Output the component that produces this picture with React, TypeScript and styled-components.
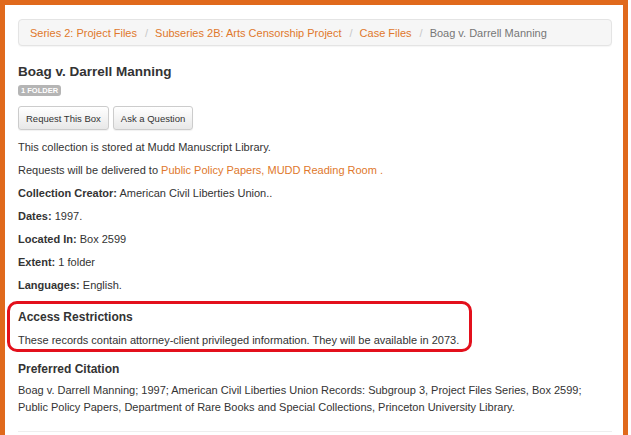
import styled, { createGlobalStyle } from "styled-components";

const GlobalStyle = createGlobalStyle`
  html, body {
    margin: 0;
    padding: 0;
    background: #fff;
  }
  body {
    font-family: "Liberation Sans", Arial, sans-serif;
    color: #333;
  }
`;

const crumbs = [
  "Series 2: Project Files",
  "Subseries 2B: Arts Censorship Project",
  "Case Files",
];

const details = [
  { label: "Collection Creator:", value: "American Civil Liberties Union.." },
  { label: "Dates:", value: "1997." },
  { label: "Located In:", value: "Box 2599" },
  { label: "Extent:", value: "1 folder" },
  { label: "Languages:", value: "English." },
];

const App = () => {
  return (
    <>
      <GlobalStyle />
      <Frame>
        <Breadcrumb>
          {crumbs.map((c) => (
            <Crumb key={c}>
              <CrumbLink href="#">{c}</CrumbLink>
              <Divider>/</Divider>
            </Crumb>
          ))}
          <Crumb $active>Boag v. Darrell Manning</Crumb>
        </Breadcrumb>

        <Title>Boag v. Darrell Manning</Title>
        <Badge>1 Folder</Badge>

        <ButtonsWrapper>
          <Button>Request This Box</Button>
          <Button>Ask a Question</Button>
        </ButtonsWrapper>

        <Text>This collection is stored at Mudd Manuscript Library.</Text>
        <Text>
          Requests will be delivered to{" "}
          <Link href="#">Public Policy Papers, MUDD Reading Room .</Link>
        </Text>
        {details.map((d) => (
          <Text key={d.label}>
            <Label>{d.label}</Label> {d.value}
          </Text>
        ))}

        <Highlight>
          <Heading>Access Restrictions</Heading>
          <Text $last>
            These records contain attorney-client privileged information. They
            will be available in 2073.
          </Text>
        </Highlight>

        <Heading $spaced>Preferred Citation</Heading>
        <Citation>
          Boag v. Darrell Manning; 1997; American Civil Liberties Union Records:
          Subgroup 3, Project Files Series, Box 2599;
          <br />
          Public Policy Papers, Department of Rare Books and Special
          Collections, Princeton University Library.
        </Citation>

        <Rule />
      </Frame>
    </>
  );
};

export default App;

const Frame = styled.div`
  width: 628px;
  min-height: 470px;
  box-sizing: border-box;
  border: 5px solid #e0691c;
  padding: 14px 11px 20px 13px;
  background: #fff;
`;

const Breadcrumb = styled.ol`
  display: flex;
  align-items: center;
  list-style: none;
  margin: 0;
  height: 27px;
  box-sizing: border-box;
  padding: 0 11px;
  background: #f6f6f6;
  border: 1px solid #e4e4e4;
  border-radius: 4px;
  box-shadow: 0 1px 1px rgba(0, 0, 0, 0.04);
  font-size: 11px;
`;

const Crumb = styled.li<{ $active?: boolean }>`
  display: flex;
  align-items: center;
  white-space: nowrap;
  color: ${(p) => (p.$active ? "#777" : "#e0782c")};
`;

const CrumbLink = styled.a`
  color: #e0782c;
  text-decoration: none;
`;

const Divider = styled.span`
  color: #c8c8c8;
  padding: 0 7px 0 8px;
`;

const Title = styled.h1`
  margin: 18px 0 0;
  font-size: 13.5px;
  line-height: 16px;
  font-weight: bold;
  color: #333;
`;

const Badge = styled.span`
  display: block;
  width: fit-content;
  margin-top: 5px;
  height: 11px;
  line-height: 11px;
  padding: 0 3px;
  background: #b5b5b5;
  color: #fff;
  font-size: 7.5px;
  font-weight: bold;
  text-transform: uppercase;
  border-radius: 3px;
`;

const ButtonsWrapper = styled.div`
  display: flex;
  gap: 4px;
  margin: 10px 0 9px;
`;

const Button = styled.button`
  height: 24px;
  padding: 0 7px;
  font-family: "Liberation Sans", Arial, sans-serif;
  font-size: 9.5px;
  color: #333;
  background: linear-gradient(#ffffff, #e8e8e8);
  border: 1px solid #cccccc;
  border-radius: 3px;
  box-shadow: 0 1px 1px rgba(0, 0, 0, 0.06);
  cursor: pointer;
`;

const Text = styled.p<{ $last?: boolean }>`
  margin: 0 0 ${(p) => (p.$last ? "1px" : "7px")};
  font-size: 11px;
  line-height: 16px;
  color: #333;
`;

const Label = styled.strong`
  font-weight: bold;
`;

const Link = styled.a`
  color: #e0782c;
  text-decoration: none;
`;

const Highlight = styled.section`
  width: fit-content;
  margin: 8px 0 0 -11px;
  padding: 5px 10px 0 8px;
  border: 3px solid #e3101c;
  border-radius: 10px;
`;

const Heading = styled.h3<{ $spaced?: boolean }>`
  margin: ${(p) => (p.$spaced ? "9px 0 5px" : "0 0 7px")};
  font-size: 12px;
  line-height: 16px;
  font-weight: bold;
  color: #333;
`;

const Citation = styled.p`
  margin: 0;
  font-size: 11px;
  line-height: 17px;
  color: #333;
`;

const Rule = styled.hr`
  margin: 15px 0 0;
  border: 0;
  border-top: 1px solid #eeeeee;
`;
